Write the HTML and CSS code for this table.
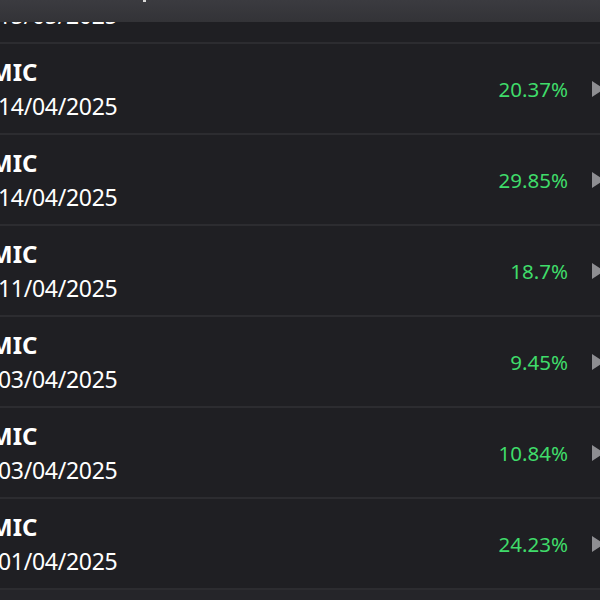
FILE: index.html
```html
<!DOCTYPE html>
<html>
<head>
<meta charset="utf-8">
<link rel="stylesheet" href="styles.css">
</head>
<body>
<div class="topbar"><span class="tick"></span></div>
<div class="list">
  <div class="row">
    <div class="info"><div class="sym">MIC</div><div class="date">15/05/2025</div></div>
    <div class="pct">12.40%</div><div class="arrow"></div>
  </div>
  <div class="row">
    <div class="info"><div class="sym">MIC</div><div class="date">14/04/2025</div></div>
    <div class="pct">20.37%</div><div class="arrow"></div>
  </div>
  <div class="row">
    <div class="info"><div class="sym">MIC</div><div class="date">14/04/2025</div></div>
    <div class="pct">29.85%</div><div class="arrow"></div>
  </div>
  <div class="row">
    <div class="info"><div class="sym">MIC</div><div class="date">11/04/2025</div></div>
    <div class="pct">18.7%</div><div class="arrow"></div>
  </div>
  <div class="row">
    <div class="info"><div class="sym">MIC</div><div class="date">03/04/2025</div></div>
    <div class="pct">9.45%</div><div class="arrow"></div>
  </div>
  <div class="row">
    <div class="info"><div class="sym">MIC</div><div class="date">03/04/2025</div></div>
    <div class="pct">10.84%</div><div class="arrow"></div>
  </div>
  <div class="row">
    <div class="info"><div class="sym">MIC</div><div class="date">01/04/2025</div></div>
    <div class="pct">24.23%</div><div class="arrow"></div>
  </div>
</div>
</body>
</html>
```
FILE: styles.css
```css
html, body {
  margin: 0;
  padding: 0;
  height: 100%;
  overflow: hidden;
  background: #252529;
  font-family: "Noto Sans", "Open Sans", sans-serif;
}
.topbar {
  position: fixed;
  top: 0;
  left: 0;
  right: 0;
  height: 22px;
  background: linear-gradient(#3b3b40, #333337);
  z-index: 2;
}
.tick {
  position: absolute;
  left: 143px;
  top: 0;
  width: 3px;
  height: 2px;
  background: #d8d8d8;
}
.list {
  margin: -47px -4px 0 -10px;
  background: #1f1f23;
}
.row {
  display: flex;
  align-items: center;
  height: 89px;
  border-bottom: 2px solid #2c2c30;
}
.info {
  display: flex;
  flex-direction: column;
  color: #ffffff;
  font-size: 24px;
  line-height: 35px;
}
.sym {
  font-weight: 700;
}
.date {
  margin-left: 8px;
  font-size: 23px;
  letter-spacing: -0.3px;
}
.pct {
  margin-left: auto;
  color: #3fdc6a;
  font-size: 20.5px;
}
.arrow {
  margin-left: 24px;
  width: 0;
  height: 0;
  border-top: 8px solid transparent;
  border-bottom: 8px solid transparent;
  border-left: 12px solid #8e8e92;
}
```
